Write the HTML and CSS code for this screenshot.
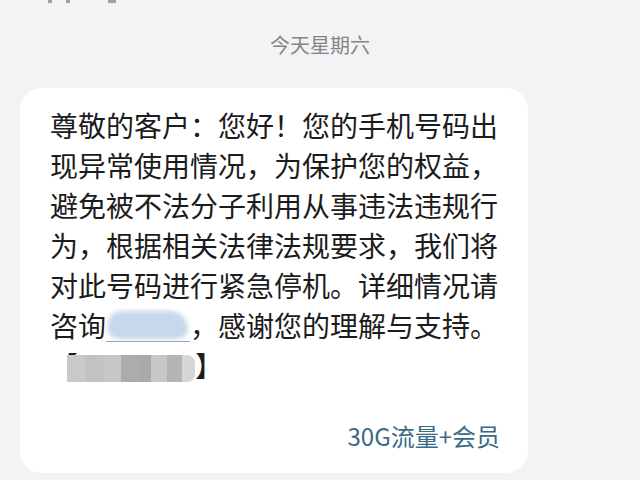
FILE: index.html
```html
<!DOCTYPE html>
<html lang="zh-CN">
<head>
<meta charset="utf-8">
<link rel="stylesheet" href="styles.css">
</head>
<body>
<div class="screen">
  <div class="prev"><span class="mark m1"></span><span class="mark m2"></span><span class="mark m3"></span></div>
  <div class="date">今天星期六</div>
  <div class="bubble">
    <div class="msg">
      <div class="line">尊敬的客户：您好！您的手机号码出</div>
      <div class="line">现异常使用情况，为保护您的权益，</div>
      <div class="line">避免被不法分子利用从事违法违规行</div>
      <div class="line">为，根据相关法律法规要求，我们将</div>
      <div class="line">对此号码进行紧急停机。详细情况请</div>
      <div class="line">咨询<span class="blob"><span class="cloud"></span></span>，感谢您的理解与支持。</div>
      <div class="line">【<span class="mosaic"></span>】</div>
    </div>
    <div class="footer">30G流量+会员</div>
  </div>
</div>
</body>
</html>
```

FILE: styles.css
```css
html, body {
  margin: 0;
  padding: 0;
}
body {
  background: #f2f3f5;
  font-family: "Noto Sans CJK SC", "Noto Sans", sans-serif;
  width: 640px;
  height: 480px;
  overflow: hidden;
}
.screen {
  display: flex;
  flex-direction: column;
}
.prev {
  height: 4px;
  display: flex;
  gap: 14px;
  padding-left: 48px;
}
.mark {
  width: 4px;
  height: 3px;
  background: #7a7a7a;
  opacity: 0.7;
}
.m3 {
  margin-left: 24px;
  width: 8px;
}
.date {
  margin-top: 27px;
  text-align: center;
  font-size: 20px;
  line-height: 28px;
  color: #858585;
}
.bubble {
  margin-top: 29px;
  margin-left: 20px;
  width: 508px;
  background: #ffffff;
  border-radius: 22px;
  padding: 17px 28px 22px 30px;
  box-sizing: border-box;
  height: 385px;
  display: flex;
  flex-direction: column;
}
.msg {
  font-size: 28px;
  line-height: 40px;
  color: #1c1c1c;
  white-space: nowrap;
}
.line {
  height: 40px;
}
.blob {
  display: inline-block;
  position: relative;
  width: 84px;
  height: 30px;
  vertical-align: -5px;
  border-bottom: 1px solid #9aa3ad;
}
.cloud {
  position: absolute;
  left: 2px;
  right: 2px;
  top: 0;
  bottom: 2px;
  background: #c7d8ec;
  border-radius: 16px 22px 12px 12px;
  filter: blur(2px);
}
.mosaic {
  display: inline-block;
  width: 128px;
  height: 27px;
  margin-left: -11px;
  vertical-align: -5px;
  border-radius: 0 8px 8px 0;
  background: linear-gradient(90deg,
    #c9c9c9 0 14%, #c2c2c2 14% 28%, #c6c6c6 28% 42%,
    #acacac 42% 56%, #a9a9a9 56% 66%, #c8c8c8 66% 78%,
    #b4b4b4 78% 90%, #d6d6d6 90% 100%);
  filter: blur(0.6px);
}
.footer {
  margin-top: auto;
  text-align: right;
  font-size: 24px;
  line-height: 30px;
  color: #3a6a86;
}
```
